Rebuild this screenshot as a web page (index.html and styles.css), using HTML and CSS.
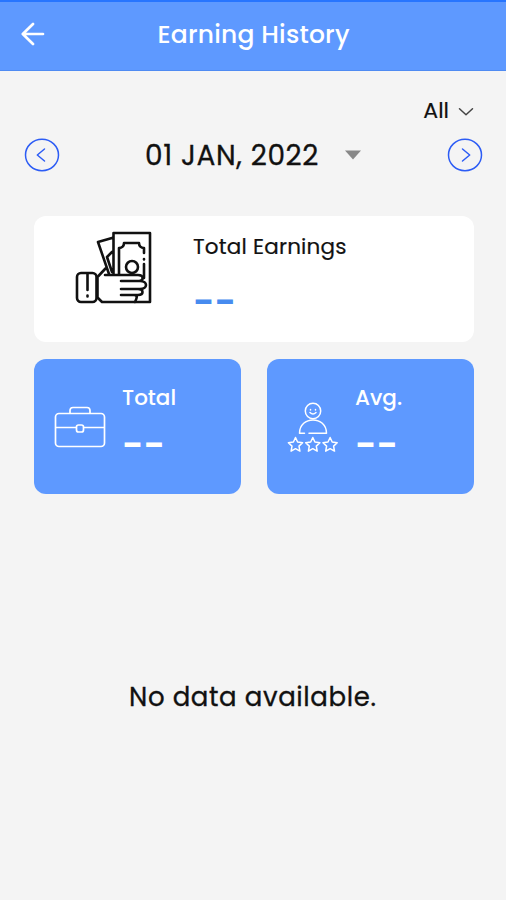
FILE: index.html
```html
<!DOCTYPE html>
<html lang="en">
<head>
<meta charset="utf-8">
<title>Earning History</title>
<link rel="stylesheet" href="styles.css">
</head>
<body>
<header class="bar">
  <svg class="back" width="24" height="24" viewBox="0 0 24 24"><path d="M22 12H2M12 2 1.800 12 12 22"/></svg>
  <h1>Earning History</h1>
</header>
<main>
  <div class="filter"><span>All</span><svg width="16" height="10" viewBox="0 0 16 10"><path d="m1.5 1.7 6.5 6 6.5-6"/></svg></div>
  <div class="dates">
    <svg class="round" width="36" height="34" viewBox="0 0 36 34"><ellipse cx="18" cy="17" rx="16.500" ry="15.700"/><path d="m20.500 11-7.200 6 7.200 6"/></svg>
    <div class="date"><span>01 JAN, 2022</span><svg width="16" height="10" viewBox="0 0 16 10"><path d="M0 .5h16L8 9.500z"/></svg></div>
    <svg class="round" width="36" height="34" viewBox="0 0 36 34"><ellipse cx="18" cy="17" rx="16.500" ry="15.700"/><path d="m15.500 11 7.200 6-7.200 6"/></svg>
  </div>
  <section class="card earnings">
    <svg class="money" width="78" height="74" viewBox="0 0 78 74">
      <path d="M38.500 43V2H75v69H27l-4.500-4.500V46l8-8.500M34 43 23 11l14-4M37 21l-5 5 5 15M44 43V17c3 0 5-2 5-5h15c0 3 2 5 5 5v5M69 33v14"/>
      <circle cx="57" cy="36" r="6"/>
      <path d="M30 44h33c6 0 6 6 1 6H46h19c8 0 8 8 0 8H46h17c6 0 6 6 0 6H46h13c4 0 3 3 1 7"/>
      <rect x="2" y="42" width="19.500" height="29" rx="4"/>
      <path d="M12.500 43v16M12.500 64.500v1M69 28v.5"/>
    </svg>
    <div class="copy"><span class="label">Total Earnings</span><span class="value">--</span></div>
  </section>
  <div class="stats">
    <section class="card stat">
      <svg class="case" width="52" height="42" viewBox="0 0 52 42">
        <rect x="1.500" y="7.500" width="49" height="33" rx="3.500"/>
        <path d="M16 7V4.500Q16 1.500 19 1.500h14q3 0 3 3V7M2 21.500h20M30 21.500h20"/>
        <rect x="22.500" y="19" width="7" height="7" rx="2"/>
      </svg>
      <div class="copy"><span class="label">Total</span><span class="value">--</span></div>
    </section>
    <section class="card stat avg">
      <svg class="person" width="52" height="50" viewBox="0 0 52 50">
        <circle cx="26" cy="9" r="7.700"/>
        <path d="M23 10.500q3 3 6 0M23.500 7.500v.5M28.500 7.500v.5M22 31.300h17.500C39.500 13.500 12.500 13.500 12.500 31.300h5"/>
        <path id="star" d="m8.500 35.500 2.100 4.500 5 .7-3.600 3.400.9 5-4.400-2.400-4.400 2.400.9-5-3.600-3.400 5-.7z"/>
        <use href="#star" x="17.300"/><use href="#star" x="34.600"/>
      </svg>
      <div class="copy"><span class="label">Avg.</span><span class="value">--</span></div>
    </section>
  </div>
  <p class="empty">No data available.</p>
</main>
</body>
</html>
```

FILE: styles.css
```css
* { box-sizing: border-box; }
body {
  margin: 0;
  height: 900px;
  background: #f4f4f4;
  color: #111;
  font-family: Poppins, Inter, "Liberation Sans", sans-serif;
  overflow: hidden;
}
svg { display: block; flex: none; fill: none; stroke-linecap: round; stroke-linejoin: round; }
.bar {
  display: grid;
  grid-template-columns: 157.5px 1fr;
  align-items: center;
  height: 71px;
  padding-bottom: 3px;
  background: #5e99ff;
  border-top: 2px solid #2775ff;
  border-bottom: 1px solid #4f8bf2;
  color: #fff;
}
.back { margin: -1px 0 0 20.5px; stroke: #fff; stroke-width: 2.7; }
h1 { margin: 0; font-size: 25px; line-height: 36px; font-weight: 500; letter-spacing: .2px; white-space: nowrap; }
.filter {
  display: flex;
  justify-content: flex-end;
  align-items: center;
  gap: 9px;
  height: 30px;
  margin: 24px 32px 0 0;
  font-size: 22px;
  -webkit-text-stroke: .2px;
}
.filter svg { margin-top: 4px; stroke: #444; stroke-width: 1.5; }
.dates { display: flex; align-items: center; justify-content: space-between; height: 34px; margin: 13px 23px 0 24px; }
.round { stroke: #2c5cf5; stroke-width: 1.5; }
.date { display: flex; align-items: center; width: 216px; justify-content: space-between; margin-left: -1px; font-size: 28px; letter-spacing: .65px; -webkit-text-stroke: .3px; white-space: nowrap; }
.date span { margin-top: 2px; }
.date svg { fill: #888; margin-top: -1px; }
.card { display: flex; border-radius: 12px; }
.copy { display: flex; flex-direction: column; }
.label { font-size: 21.5px; line-height: 30px; white-space: nowrap; }
.value { font-size: 37px; line-height: 50px; font-weight: 600; }
.earnings { width: 440px; height: 126px; margin: 44px 0 0 34px; padding: 16px 0 0 41px; background: #fff; }
.money { margin-top: -1px; stroke: #111; stroke-width: 2.600; }
.earnings .label { letter-spacing: .2px; -webkit-text-stroke: .2px; }
.earnings .copy { margin-left: 40px; }
.earnings .value { color: #478bef; margin-top: 15px; }
.stats { display: grid; grid-template-columns: 207px 207px; gap: 26px; margin: 17px 0 0 34px; }
.stat { height: 135px; padding-left: 20px; background: #5e99ff; color: #fff; }
.stat .copy { margin: 24px 0 0 16px; }
.stat .label { font-weight: 500; }
.stat .value { margin-top: 7px; }
.case { margin-top: 47px; stroke: #fff; stroke-width: 1.700; }
.person { margin-top: 43px; stroke: #fff; stroke-width: 1.500; }
.empty { margin: 185px 0 0 129px; font-size: 26px; line-height: 36px; letter-spacing: .6px; -webkit-text-stroke: .3px; white-space: nowrap; }
```
